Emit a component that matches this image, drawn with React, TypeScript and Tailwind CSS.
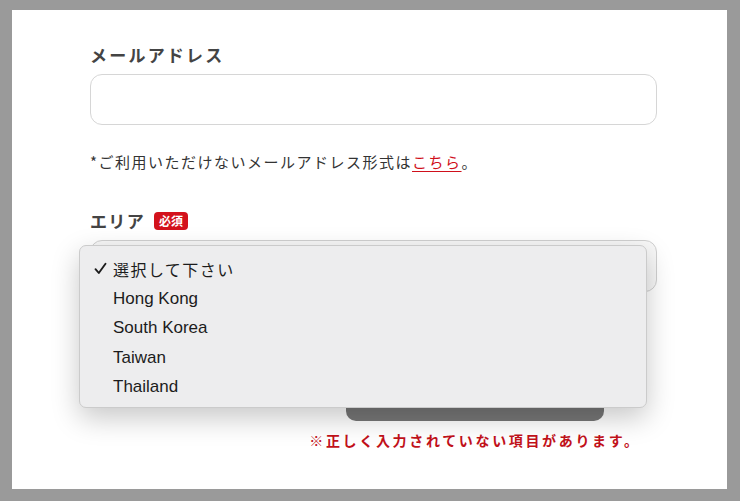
import React from "react";

const jp = "font-['Noto_Sans_CJK_JP','Noto_Sans',sans-serif]";
const latin = "font-['Liberation_Sans','Noto_Sans_CJK_JP',sans-serif]";

const areas = ["選択して下さい", "Hong Kong", "South Korea", "Taiwan", "Thailand"];

function Check() {
  return (
    <svg width="13" height="13" viewBox="0 0 13 13" fill="none" className="ml-[1px]">
      <path d="M1.5 7.2 L4.8 11 L11.5 1.8" stroke="#1c1c1c" strokeWidth="1.9" strokeLinecap="round" strokeLinejoin="round" />
    </svg>
  );
}

export default function App() {
  return (
    <div className="min-h-screen w-[740px] h-[501px] bg-[#9a9a9a] pt-[10px] pl-[12px]">
      <div className={`w-[715px] h-[479px] bg-white pt-[31px] pl-[78px] ${jp}`}>
        <div className="w-[567px]">
          {/* Email */}
          <div className="h-[27px] leading-[27px] text-[17px] font-bold tracking-[0.13em] text-[#444]">
            メールアドレス
          </div>
          <div className="mt-[6px] h-[51px] rounded-[12px] border border-[#d6d6d6] bg-white" />
          <p className="mt-[25px] h-[24px] leading-[24px] text-[15px] tracking-[0.1em] text-[#333]">
            *ご利用いただけないメールアドレス形式は
            <a href="#" className="text-[#d0101b] underline underline-offset-[3px]">
              こちら
            </a>
            。
          </p>

          {/* Area */}
          <div className="mt-[33px] flex items-center h-[27px]">
            <span className="leading-[27px] text-[17px] font-bold tracking-[0.08em] text-[#444]">
              エリア
            </span>
            <span className="ml-[9px] flex items-center justify-center w-[34px] h-[18px] rounded-[4px] bg-[#d3121c] text-white text-[12px] font-bold leading-none">
              必須
            </span>
          </div>
          <div className="relative mt-[6px]">
            <div className="h-[52px] rounded-[12px] border border-[#d0d0d0] bg-[#f7f7f7]" />

            {/* Open select menu */}
            <div className="absolute left-[-11px] top-[5px] z-10 w-[568px] rounded-[7px] border border-[#cbcbcb] bg-[#ededee] pt-[8px] pb-[5px] shadow-[0_10px_28px_rgba(0,0,0,0.22)]">
              {areas.map((a, i) => (
                <div key={a} className="flex items-center h-[29.6px] pl-[13px] text-[17px] text-[#1c1c1c]">
                  <span className="w-[20px] flex items-center">{i === 0 ? <Check /> : null}</span>
                  <span className={i === 0 ? `${jp} text-[16px] tracking-[0.09em]` : latin}>{a}</span>
                </div>
              ))}
            </div>
          </div>

          {/* Submit + error */}
          <div className="pl-[203px] flex flex-col items-center">
            <div className="mt-[79px] w-[258px] h-[50px] rounded-[10px] bg-[#777777]" />
            <p className="mt-[9px] h-[20px] leading-[20px] text-[14px] font-bold tracking-[0.19em] text-[#c2111a] whitespace-nowrap">
              ※正しく入力されていない項目があります。
            </p>
          </div>
        </div>
      </div>
    </div>
  );
}
